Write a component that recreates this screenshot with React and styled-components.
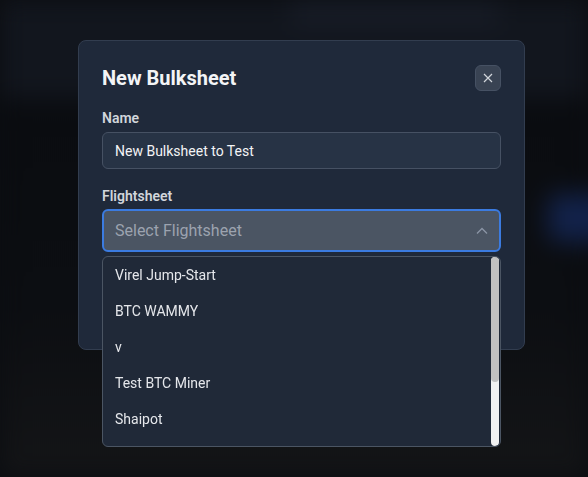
import React from 'react'
import styled, { createGlobalStyle } from 'styled-components'

const GlobalStyle = createGlobalStyle`
  html, body {
    margin: 0;
    padding: 0;
    background: #0b0d11;
    font-family: Roboto, "Noto Sans", "Liberation Sans", sans-serif;
    overflow: hidden;
  }
  * { box-sizing: border-box; }
`

// blurred page behind the dialog
const BgPage = styled.div`
  width: 588px;
  height: 477px;
  display: flex;
  flex-direction: column;
  filter: blur(12px);
  background: #0c0e12;
`

const BgTop = styled.div`
  height: 98px;
  background: #12161e;
  display: flex;
  align-items: flex-start;
  padding: 0 0 0 290px;
`

const BgPill = styled.div`
  width: ${p => p.w}px;
  height: ${p => p.h}px;
  background: ${p => p.c};
  border-radius: 6px;
`

const BgMain = styled.div`
  flex: 1;
  display: flex;
  padding: 96px 0 0 0;
  background: linear-gradient(180deg, #0a0c10 0%, #0c0e12 55%, #141517 100%);
`

const BgBlue = styled.div`
  margin-left: auto;
  margin-right: -24px;
  width: 64px;
  height: 48px;
  border-radius: 10px;
  background: #12224a;
`

const Overlay = styled.div`
  position: fixed;
  inset: 0;
  padding: 40px 0 0 78px;
  display: flex;
  align-items: flex-start;
`

const Modal = styled.div`
  width: 447px;
  background: #1f293a;
  border: 1px solid #323d4f;
  border-radius: 8px;
  padding: 23px;
  display: flex;
  flex-direction: column;
`

const Header = styled.div`
  display: flex;
  align-items: center;
  justify-content: space-between;
  height: 28px;
  margin-bottom: 16px;
`

const Title = styled.h2`
  margin: 0;
  font-size: 20px;
  font-weight: 700;
  color: #f3f4f6;
  line-height: 28px;
`

const CloseButton = styled.button`
  width: 26px;
  height: 26px;
  border-radius: 6px;
  border: 1px solid #465163;
  background: #394353;
  color: #d1d5db;
  display: flex;
  align-items: center;
  justify-content: center;
  padding: 0;
`

const Field = styled.div`
  display: flex;
  flex-direction: column;
  margin-bottom: ${p => p.mb || 0}px;
  position: relative;
`

const Label = styled.label`
  font-size: 14px;
  font-weight: 600;
  color: #d1d5db;
  line-height: 20px;
  margin-bottom: ${p => p.mb}px;
`

const Input = styled.div`
  height: 37px;
  border: 1px solid #465163;
  background: #273345;
  border-radius: 6px;
  padding: 0 12px;
  display: flex;
  align-items: center;
  font-size: 14px;
  color: #f3f4f6;
`

const Select = styled.div`
  height: 43px;
  border: 2px solid #3b7be0;
  background: #4b5563;
  border-radius: 6px;
  padding: 0 11px;
  display: flex;
  align-items: center;
  justify-content: space-between;
  font-size: 16px;
  color: #9ca3af;
`

const Menu = styled.div`
  position: absolute;
  top: calc(100% + 4px);
  left: 0;
  right: 0;
  height: 191px;
  overflow: hidden;
  background: #202938;
  border: 1px solid #4b5563;
  border-radius: 6px;
`

const List = styled.ul`
  margin: 0;
  padding: 0;
  list-style: none;
`

const Item = styled.li`
  height: 36px;
  display: flex;
  align-items: center;
  padding: 0 12px;
  font-size: 14px;
  color: #e5e7eb;
`

const ScrollTrack = styled.div`
  position: absolute;
  top: 0;
  bottom: 0;
  right: 1px;
  width: 8px;
  border-radius: 4px;
  background: #f1f1f1;
`

const ScrollThumb = styled.div`
  height: 125px;
  border-radius: 4px;
  background: #c1c1c1;
`

const Footer = styled.div`
  height: 74px;
`

const options = [
  'Virel Jump-Start',
  'BTC WAMMY',
  'v',
  'Test BTC Miner',
  'Shaipot',
]

export default function App() {
  return (
    <>
      <GlobalStyle />
      <BgPage>
        <BgTop>
          <BgPill w={210} h={24} c="#181d28" />
        </BgTop>
        <BgMain>
          <BgBlue />
        </BgMain>
      </BgPage>
      <Overlay>
        <Modal>
          <Header>
            <Title>New Bulksheet</Title>
            <CloseButton>
              <svg width="10" height="10" viewBox="0 0 10 10" fill="none" stroke="currentColor" strokeWidth="1.2">
                <path d="M1 1 L9 9 M9 1 L1 9" />
              </svg>
            </CloseButton>
          </Header>
          <Field mb={17}>
            <Label mb={4}>Name</Label>
            <Input>New Bulksheet to Test</Input>
          </Field>
          <Field>
            <Label mb={3}>Flightsheet</Label>
            <Select>
              <span>Select Flightsheet</span>
              <svg width="12" height="8" viewBox="0 0 12 8" fill="none" stroke="#8b95a5" strokeWidth="1.3">
                <path d="M1 6.5 L6 1.5 L11 6.5" />
              </svg>
            </Select>
            <Menu>
              <List>
                {options.map((o, i) => (
                  <Item key={i}>{o}</Item>
                ))}
              </List>
              <ScrollTrack>
                <ScrollThumb />
              </ScrollTrack>
            </Menu>
          </Field>
          <Footer />
        </Modal>
      </Overlay>
    </>
  )
}
